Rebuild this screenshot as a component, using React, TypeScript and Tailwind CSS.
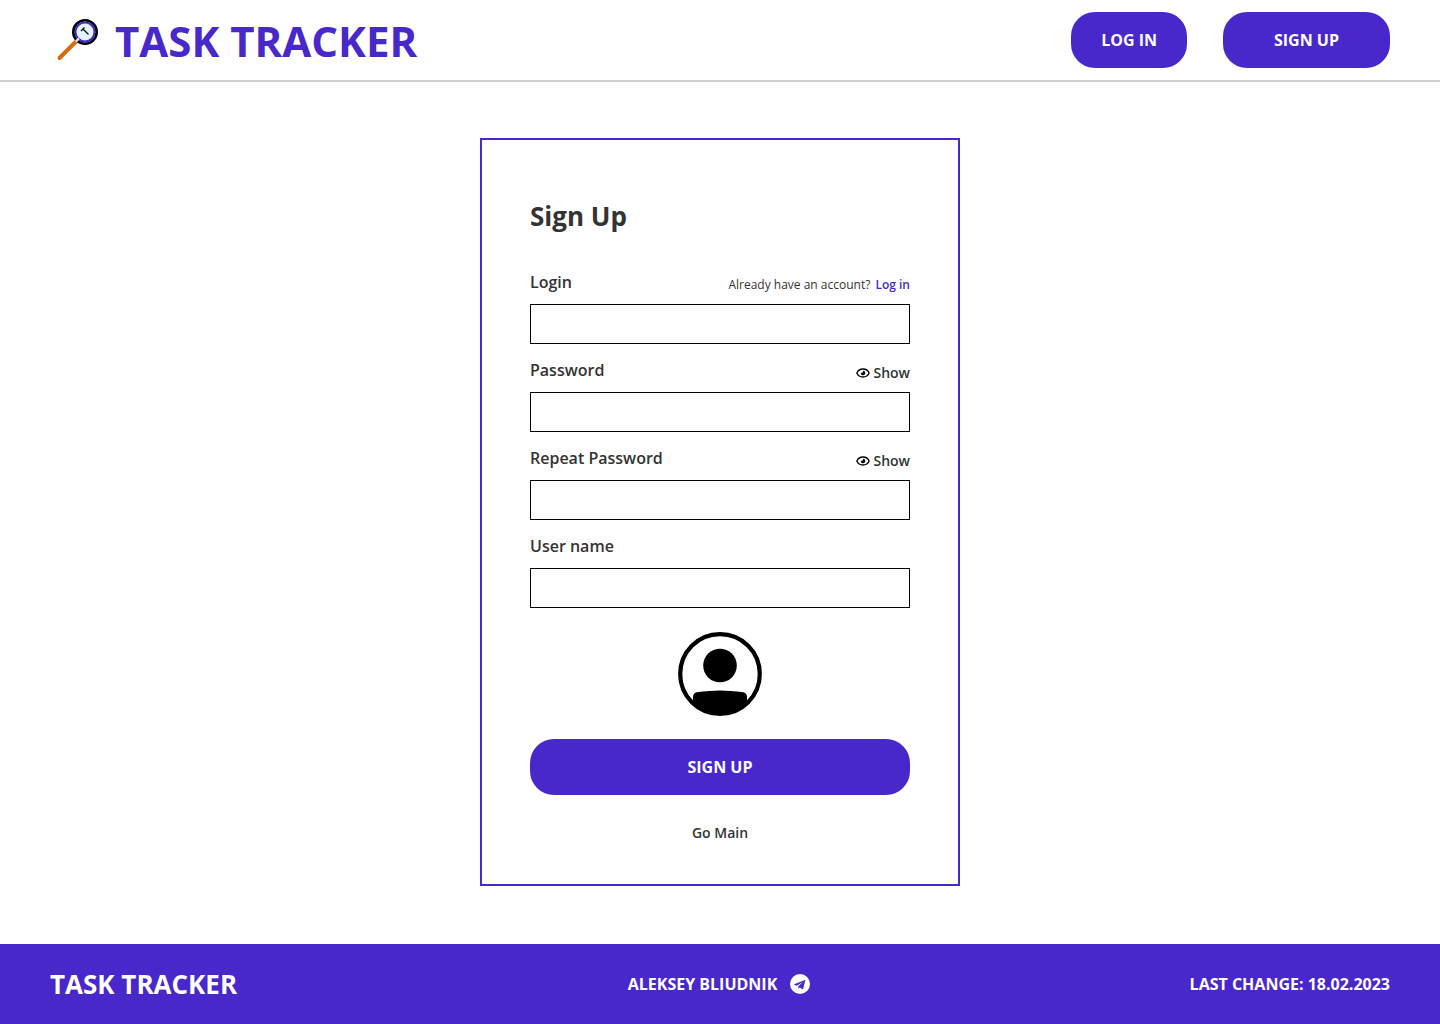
import { useState } from "react";
import type { ReactNode } from "react";

function MagnifierLogo() {
  return (
    <svg className="h-12 w-12" viewBox="-2 0 48 48" fill="none" aria-hidden="true">
      <path d="M7.5 42 23.5 26" stroke="#d96c0a" strokeWidth="4" strokeLinecap="round" />
      <circle cx="33" cy="16" r="11.7" fill="#e2f5fd" stroke="#000" strokeWidth="2.6" />
      <circle cx="33" cy="16" r="9.5" stroke="#4827cb" strokeWidth="2" />
      <path d="m23.8 25.600 3-3.200" stroke="#dfe0e6" strokeWidth="2.4" />
      <path d="m29 15 3.500-3.500M31 13l5.500 5.500" stroke="#111" strokeWidth="1.3" />
    </svg>
  );
}

function EyeIcon() {
  return (
    <svg className="h-4 w-4" viewBox="0 0 16 16" fill="none" aria-hidden="true">
      <path
        d="M1.8 8C3 5.300 5.300 4 8 4s5 1.300 6.200 4C13 10.700 10.700 12 8 12S3 10.700 1.800 8Z"
        stroke="#000"
        strokeWidth="1.300"
      />
      <path d="M8 5.800A2.200 2.200 0 1 1 5.900 7.500c.6.900 2.300.3 2.100-1.700Z" fill="#000" />
    </svg>
  );
}

function AvatarIcon() {
  return (
    <svg className="h-21 w-21" viewBox="0 0 84 84" fill="none" aria-hidden="true">
      <circle cx="42" cy="42" r="39.800" stroke="#000" strokeWidth="4.200" />
      <circle cx="42" cy="33.500" r="16.800" fill="#000" />
      <path
        d="M15 69V65Q15 60.500 20 60Q42 57 64 60Q69 60.500 69 65V69A38 38 0 0 1 42 82A38 38 0 0 1 15 69Z"
        fill="#000"
      />
    </svg>
  );
}

function TelegramIcon() {
  return (
    <svg className="h-5 w-5" viewBox="0 0 20 20" aria-hidden="true">
      <circle cx="10" cy="10" r="10" fill="#fff" />
      <path
        d="M14.900 5.900 4.200 10.200c-.4.200-.4.500 0 .6l2.700.9 6-3.900-4.500 4.500-.2 2.500 1.600-1.400 2.600 1.800c.4.200.7.100.8-.4l2-8.400c.1-.4 0-.6-.3-.5Z"
        fill="#4827cb"
      />
    </svg>
  );
}

type FieldProps = {
  id: string;
  label: string;
  type?: string;
  aside?: ReactNode;
};

function Field({ id, label, type = "text", aside }: FieldProps) {
  return (
    <div className="flex flex-col">
      <div className="flex h-8 items-start justify-between">
        <label htmlFor={id} className="text-base leading-5 font-semibold">
          {label}
        </label>
        {aside}
      </div>
      <input id={id} type={type} className="h-10 w-full border border-black bg-white px-3 text-base" />
    </div>
  );
}

function PasswordField({ id, label }: { id: string; label: string }) {
  const [visible, setVisible] = useState(false);
  return (
    <Field
      id={id}
      label={label}
      type={visible ? "text" : "password"}
      aside={
        <button
          type="button"
          onClick={() => setVisible(!visible)}
          className="mt-[3px] flex cursor-pointer items-center gap-0.5 text-sm leading-5 font-semibold"
        >
          <EyeIcon />
          {visible ? "Hide" : "Show"}
        </button>
      }
    />
  );
}

export default function App() {
  return (
    <div className="flex min-h-screen flex-col bg-white font-['Open_Sans',sans-serif] text-[#333333]">
      <header className="flex h-20 items-center justify-between px-[50px] shadow-[0_2px_0_#cfcfcf]">
        <a href="#" className="flex items-center gap-[17px] text-[#4827cb]">
          <MagnifierLogo />
          <span className="pt-0.5 text-[42px] leading-12 font-bold">TASK TRACKER</span>
        </a>
        <nav className="flex gap-9">
          <button
            type="button"
            className="h-14 cursor-pointer rounded-3xl bg-[#4827cb] px-[30px] text-base font-bold text-white"
          >
            LOG IN
          </button>
          <button
            type="button"
            className="h-14 cursor-pointer rounded-3xl bg-[#4827cb] px-[51px] text-base font-bold text-white"
          >
            SIGN UP
          </button>
        </nav>
      </header>

      <main className="flex grow items-center justify-center py-8">
        <form
          className="flex w-full max-w-[480px] flex-col border-2 border-[#4827cb] px-12 pt-[58px] pb-[41px]"
          onSubmit={(event) => event.preventDefault()}
        >
          <h1 className="text-[26px] leading-9 font-bold">Sign Up</h1>
          <div className="mt-[38px] flex flex-col gap-4">
            <Field
              id="login"
              label="Login"
              aside={
                <p className="mt-[5px] flex gap-[5px] text-xs leading-4">
                  Already have an account?
                  <a href="#" className="font-semibold text-[#4827cb]">
                    Log in
                  </a>
                </p>
              }
            />
            <PasswordField id="password" label="Password" />
            <PasswordField id="repeat-password" label="Repeat Password" />
            <Field id="user-name" label="User name" />
          </div>
          <button type="button" aria-label="Choose avatar" className="mt-6 cursor-pointer self-center">
            <AvatarIcon />
          </button>
          <button
            type="submit"
            className="mt-[23px] h-14 cursor-pointer rounded-3xl bg-[#4827cb] text-base font-bold text-white"
          >
            SIGN UP
          </button>
          <a href="#" className="mt-7 self-center text-sm leading-5 font-semibold">
            Go Main
          </a>
        </form>
      </main>

      <footer className="grid h-20 grid-cols-3 items-center bg-[#4827cb] px-[50px] text-base font-bold text-white">
        <span className="text-[26px] leading-9">TASK TRACKER</span>
        <a href="#" className="flex items-center gap-[13px] justify-self-center pr-0.5">
          ALEKSEY BLIUDNIK
          <TelegramIcon />
        </a>
        <span className="justify-self-end">LAST CHANGE: 18.02.2023</span>
      </footer>
    </div>
  );
}
